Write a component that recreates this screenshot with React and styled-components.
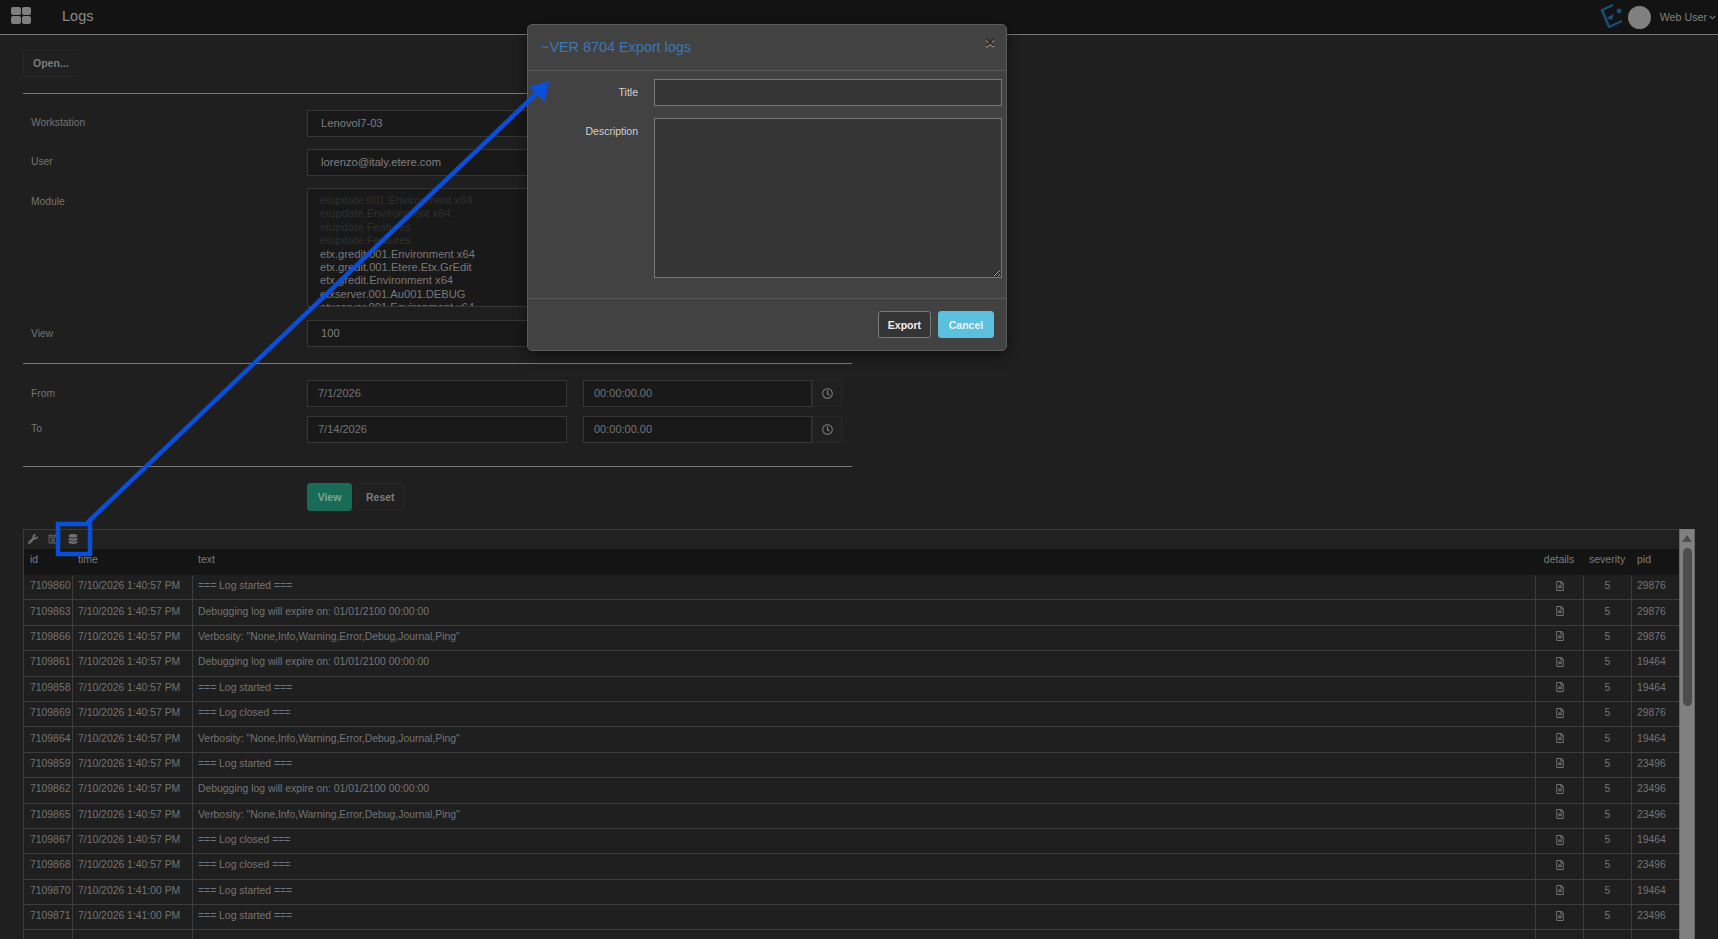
import React from 'react';
import styled, { createGlobalStyle } from 'styled-components';
import { FaWrench, FaRegSave, FaDatabase, FaRegFileAlt, FaRegClock, FaChevronDown } from 'react-icons/fa';

const STARTED = '=== Log started ===';
const CLOSED = '=== Log closed ===';
const EXPIRE = 'Debugging log will expire on: 01/01/2100 00:00:00';
const VERBOSITY = 'Verbosity: "None,Info,Warning,Error,Debug,Journal,Ping"';
const T1 = '7/10/2026 1:40:57 PM';
const T2 = '7/10/2026 1:41:00 PM';

const rows = [
  ['7109860', T1, STARTED, '29876'],
  ['7109863', T1, EXPIRE, '29876'],
  ['7109866', T1, VERBOSITY, '29876'],
  ['7109861', T1, EXPIRE, '19464'],
  ['7109858', T1, STARTED, '19464'],
  ['7109869', T1, CLOSED, '29876'],
  ['7109864', T1, VERBOSITY, '19464'],
  ['7109859', T1, STARTED, '23496'],
  ['7109862', T1, EXPIRE, '23496'],
  ['7109865', T1, VERBOSITY, '23496'],
  ['7109867', T1, CLOSED, '19464'],
  ['7109868', T1, CLOSED, '23496'],
  ['7109870', T2, STARTED, '19464'],
  ['7109871', T2, STARTED, '23496'],
];

const modules = [
  ['etupdate.001.Environment x64', true],
  ['etupdate.Environment x64', true],
  ['etupdate.Features', true],
  ['etupdate.Features', true],
  ['etx.gredit.001.Environment x64'],
  ['etx.gredit.001.Etere.Etx.GrEdit'],
  ['etx.gredit.Environment x64'],
  ['etxserver.001.Au001.DEBUG'],
  ['etxserver.001.Environment x64'],
];

export default function App() {
  return (
    <>
      <GlobalStyle />
      <Page>
        <TopBar>
          <AppsIcon>
            <i /><i /><i /><i />
          </AppsIcon>
          <PageTitle>Logs</PageTitle>
          <UserArea>
            <Logo viewBox="0 0 26 28">
              <path d="M13 2 L2 7 L9 24 L22 18" fill="none" stroke="#155078" strokeWidth="2.4" />
              <path d="M6 15 L14 11 L12 17 Z" fill="#155078" />
              <circle cx="19" cy="8" r="2.4" fill="#155078" />
            </Logo>
            <Avatar />
            <UserName>Web User</UserName>
            <FaChevronDown size={7} color="#808080" />
          </UserArea>
        </TopBar>

        <Content>
          <GhostButton>Open...</GhostButton>
          <Divider $top={16} />

          <FormRow $top={16}>
            <FieldLabel $top={7}>Workstation</FieldLabel>
            <SelectBox>Lenovol7-03</SelectBox>
          </FormRow>
          <FormRow $top={12}>
            <FieldLabel $top={7}>User</FieldLabel>
            <SelectBox>lorenzo@italy.etere.com</SelectBox>
          </FormRow>
          <FormRow $top={12}>
            <FieldLabel>Module</FieldLabel>
            <ModuleList>
              {modules.map(([name, off], i) => (
                <ModuleItem key={i} $off={off}>{name}</ModuleItem>
              ))}
            </ModuleList>
          </FormRow>
          <FormRow $top={13}>
            <FieldLabel>View</FieldLabel>
            <SelectBox>100</SelectBox>
          </FormRow>
          <Divider $top={16} />

          <FormRow $top={16}>
            <FieldLabel>From</FieldLabel>
            <DateBox>7/1/2026</DateBox>
            <TimeBox>00:00:00.00</TimeBox>
            <ClockButton><FaRegClock size={11} /></ClockButton>
          </FormRow>
          <FormRow $top={9}>
            <FieldLabel $top={7}>To</FieldLabel>
            <DateBox>7/14/2026</DateBox>
            <TimeBox>00:00:00.00</TimeBox>
            <ClockButton><FaRegClock size={11} /></ClockButton>
          </FormRow>
          <Divider $top={23} />

          <ActionRow>
            <GreenButton>View</GreenButton>
            <GhostButton>Reset</GhostButton>
          </ActionRow>

          <GridWrap>
            <GridPanel>
              <GridTools>
                <FaWrench size={10} />
                <FaRegSave size={10} />
                <FaDatabase size={10} />
              </GridTools>
              <GridHead>
                <HeadCell>id</HeadCell>
                <HeadCell>time</HeadCell>
                <HeadCell>text</HeadCell>
                <HeadCell $center>details</HeadCell>
                <HeadCell $center>severity</HeadCell>
                <HeadCell>pid</HeadCell>
              </GridHead>
              {rows.map((r) => (
                <GridRow key={r[0]}>
                  <Cell>{r[0]}</Cell>
                  <Cell>{r[1]}</Cell>
                  <Cell>{r[2]}</Cell>
                  <Cell $center><FaRegFileAlt size={10} /></Cell>
                  <Cell $center>5</Cell>
                  <Cell>{r[3]}</Cell>
                </GridRow>
              ))}
              <GridRow>
                <Cell /><Cell /><Cell /><Cell /><Cell /><Cell />
              </GridRow>
            </GridPanel>
            <Scrollbar>
              <ScrollArrow />
              <ScrollThumb />
            </Scrollbar>
          </GridWrap>
        </Content>

        <Modal>
          <ModalHead>
            <ModalTitle>~VER 8704 Export logs</ModalTitle>
            <CloseMark>×</CloseMark>
          </ModalHead>
          <ModalBody>
            <ModalRow>
              <ModalLabel>Title</ModalLabel>
              <ModalInput />
            </ModalRow>
            <ModalRow>
              <ModalLabel>Description</ModalLabel>
              <ModalTextarea />
            </ModalRow>
          </ModalBody>
          <ModalFoot>
            <ExportButton>Export</ExportButton>
            <CancelButton>Cancel</CancelButton>
          </ModalFoot>
        </Modal>

        <Annotation viewBox="0 0 1718 939">
          <rect x="58" y="524" width="32" height="30" fill="none" stroke="#0b4fd8" strokeWidth="4.5" />
          <line x1="87" y1="523" x2="537" y2="93" stroke="#0b4fd8" strokeWidth="4.5" />
          <path d="M549 81 L529 87 L545 102 Z" fill="#0b4fd8" />
        </Annotation>
      </Page>
    </>
  );
}

const GlobalStyle = createGlobalStyle`
  html, body {
    margin: 0;
    height: 100%;
    overflow: hidden;
    background: #1f1f1f;
  }
  body {
    font-family: "Liberation Sans", Arial, sans-serif;
    color: #808080;
  }
  * {
    box-sizing: border-box;
  }
`;

const Page = styled.div`
  position: relative;
  width: 1718px;
  height: 939px;
  overflow: hidden;
  background: #1f1f1f;
`;

const TopBar = styled.div`
  height: 35px;
  display: flex;
  align-items: center;
  padding: 0 2px 0 11px;
  background: #131313;
  border-bottom: 1px solid #7a7a7a;
`;

const AppsIcon = styled.div`
  width: 20px;
  height: 17px;
  margin-top: -4px;
  display: grid;
  grid-template-columns: 1fr 1fr;
  grid-template-rows: 1fr 1fr;
  gap: 1px;
  i {
    background: #7f7f7f;
    border-radius: 2px;
  }
`;

const PageTitle = styled.div`
  margin: -2px 0 0 31px;
  font-size: 14.5px;
  color: #8a8a8a;
`;

const UserArea = styled.div`
  margin-left: auto;
  display: flex;
  align-items: center;
`;

const Logo = styled.svg`
  width: 26px;
  height: 28px;
  margin-right: 1px;
`;

const Avatar = styled.div`
  width: 23px;
  height: 23px;
  margin-left: 1px;
  border-radius: 50%;
  background: #808080;
`;

const UserName = styled.span`
  margin: 0 2px 0 9px;
  font-size: 10.7px;
  color: #808080;
`;

const Content = styled.div`
  padding: 14px 22px 0 23px;
`;

const GhostButton = styled.button`
  height: 28px;
  padding: 0 9px;
  font: bold 10.5px "Liberation Sans", Arial, sans-serif;
  color: #7c7c7c;
  background: #202020;
  border: 1px solid #272727;
  border-radius: 3px;
`;

const Divider = styled.div`
  width: 829px;
  height: 1px;
  margin-top: ${(p) => p.$top}px;
  background: #7a7a7a;
`;

const FormRow = styled.div`
  width: 829px;
  margin-top: ${(p) => p.$top}px;
  display: flex;
  align-items: flex-start;
`;

const FieldLabel = styled.div`
  width: 284px;
  padding: ${(p) => p.$top ?? 8}px 0 0 8px;
  font-size: 10.3px;
  color: #747474;
`;

const SelectBox = styled.div`
  flex: 1;
  height: 27px;
  padding-left: 13px;
  font-size: 11.2px;
  line-height: 25px;
  color: #7e7e7e;
  background: #191919;
  border: 1px solid #363636;
`;

const ModuleList = styled.div`
  flex: 1;
  height: 119px;
  padding: 5px 12px;
  overflow: hidden;
  background: #191919;
  border: 1px solid #363636;
`;

const ModuleItem = styled.div`
  font-size: 11.2px;
  line-height: 13.4px;
  color: ${(p) => (p.$off ? '#303030' : '#787878')};
`;

const DateBox = styled.div`
  width: 260px;
  height: 27px;
  padding-left: 10px;
  font-size: 11px;
  line-height: 25px;
  color: #747474;
  background: #191919;
  border: 1px solid #363636;
`;

const TimeBox = styled(DateBox)`
  width: 229px;
  margin-left: 16px;
`;

const ClockButton = styled.div`
  width: 30px;
  height: 27px;
  display: flex;
  align-items: center;
  justify-content: center;
  color: #7c7c7c;
  background: #202020;
  border: 1px solid #272727;
`;

const ActionRow = styled.div`
  margin: 16px 0 0 284px;
  display: flex;
  gap: 4px;
`;

const GreenButton = styled(GhostButton)`
  width: 45px;
  padding: 0;
  color: #7fa59a;
  background: #176b57;
  border-color: #176b57;
`;

const GridWrap = styled.div`
  width: 1672px;
  margin-top: 18px;
  display: flex;
`;

const GridPanel = styled.div`
  flex: 1;
  min-width: 0;
  border-left: 1px solid #3a3a3a;
`;

const GridTools = styled.div`
  height: 20px;
  display: flex;
  align-items: center;
  gap: 10px;
  padding: 0 0 2px 4px;
  color: #6f6f6f;
  background: #212121;
  border-top: 1px solid #3a3a3a;
`;

const columns = '48px 120px 1343px 48px 48px 48px';

const GridHead = styled.div`
  height: 26px;
  display: grid;
  grid-template-columns: ${columns};
  background: #141414;
`;

const GridRow = styled.div`
  height: 25.4px;
  display: grid;
  grid-template-columns: ${columns};
  border-bottom: 1px solid #3c3c3c;
`;

const HeadCell = styled.div`
  padding: 4px 6px 0;
  font-size: 10.5px;
  text-align: ${(p) => (p.$center ? 'center' : 'left')};
  color: #7c7c7c;
`;

const Cell = styled.div`
  padding: 0 5px 3px;
  display: flex;
  align-items: center;
  justify-content: ${(p) => (p.$center ? 'center' : 'flex-start')};
  font-size: 10.4px;
  white-space: nowrap;
  overflow: hidden;
  color: #747474;
  border-left: 1px solid #3c3c3c;
  &:first-child {
    border-left: 0;
    padding-left: 6px;
  }
`;

const Scrollbar = styled.div`
  width: 16px;
  height: 410px;
  display: flex;
  flex-direction: column;
  align-items: center;
  background: #808080;
  border-left: 1px solid #666;
  border-right: 1px solid #666;
`;

const ScrollArrow = styled.div`
  margin-top: 6px;
  border-left: 5px solid transparent;
  border-right: 5px solid transparent;
  border-bottom: 7px solid #4d4d4d;
`;

const ScrollThumb = styled.div`
  width: 9px;
  height: 158px;
  margin-top: 6px;
  border-radius: 5px;
  background: #4d4d4d;
`;

const Annotation = styled.svg`
  position: absolute;
  inset: 0;
  width: 1718px;
  height: 939px;
  pointer-events: none;
`;

const Modal = styled.div`
  position: absolute;
  top: 24px;
  left: 527px;
  width: 480px;
  height: 327px;
  background: #424242;
  border: 1px solid #5a5a5a;
  border-radius: 5px;
  box-shadow: 0 4px 14px rgba(0, 0, 0, 0.5);
`;

const ModalHead = styled.div`
  height: 46px;
  padding: 0 11px 0 13px;
  display: flex;
  align-items: center;
  justify-content: space-between;
  border-bottom: 1px solid #595959;
`;

const ModalTitle = styled.div`
  margin-top: -2px;
  font-size: 14.4px;
  color: #3a78b5;
`;

const CloseMark = styled.div`
  margin-top: -10px;
  font-size: 17px;
  font-weight: bold;
  color: #2a2a2a;
  text-shadow: 0 1px 0 #aaa;
`;

const ModalBody = styled.div`
  height: 227px;
  padding: 8px 4px 0 0;
`;

const ModalRow = styled.div`
  display: flex;
  margin-bottom: 12px;
`;

const ModalLabel = styled.div`
  width: 126px;
  padding: 7px 16px 0 0;
  font-size: 10.5px;
  text-align: right;
  color: #d0d0d0;
`;

const ModalInput = styled.input`
  flex: 1;
  height: 27px;
  padding: 0;
  background: #353535;
  border: 1px solid #777;
  border-radius: 0;
`;

const ModalTextarea = styled.textarea`
  flex: 1;
  height: 160px;
  padding: 0;
  background: #353535;
  border: 1px solid #777;
  border-radius: 0;
`;

const ModalFoot = styled.div`
  height: 52px;
  padding: 12px 12px 0 0;
  display: flex;
  justify-content: flex-end;
  gap: 7px;
  border-top: 1px solid #595959;
`;

const ExportButton = styled.button`
  width: 53px;
  height: 27px;
  padding: 0;
  font: bold 10.5px "Liberation Sans", Arial, sans-serif;
  color: #f0f0f0;
  background: #353535;
  border: 1px solid #7a7a7a;
  border-radius: 3px;
`;

const CancelButton = styled(ExportButton)`
  width: 56px;
  background: #5bc0de;
  border-color: #5bc0de;
`;
